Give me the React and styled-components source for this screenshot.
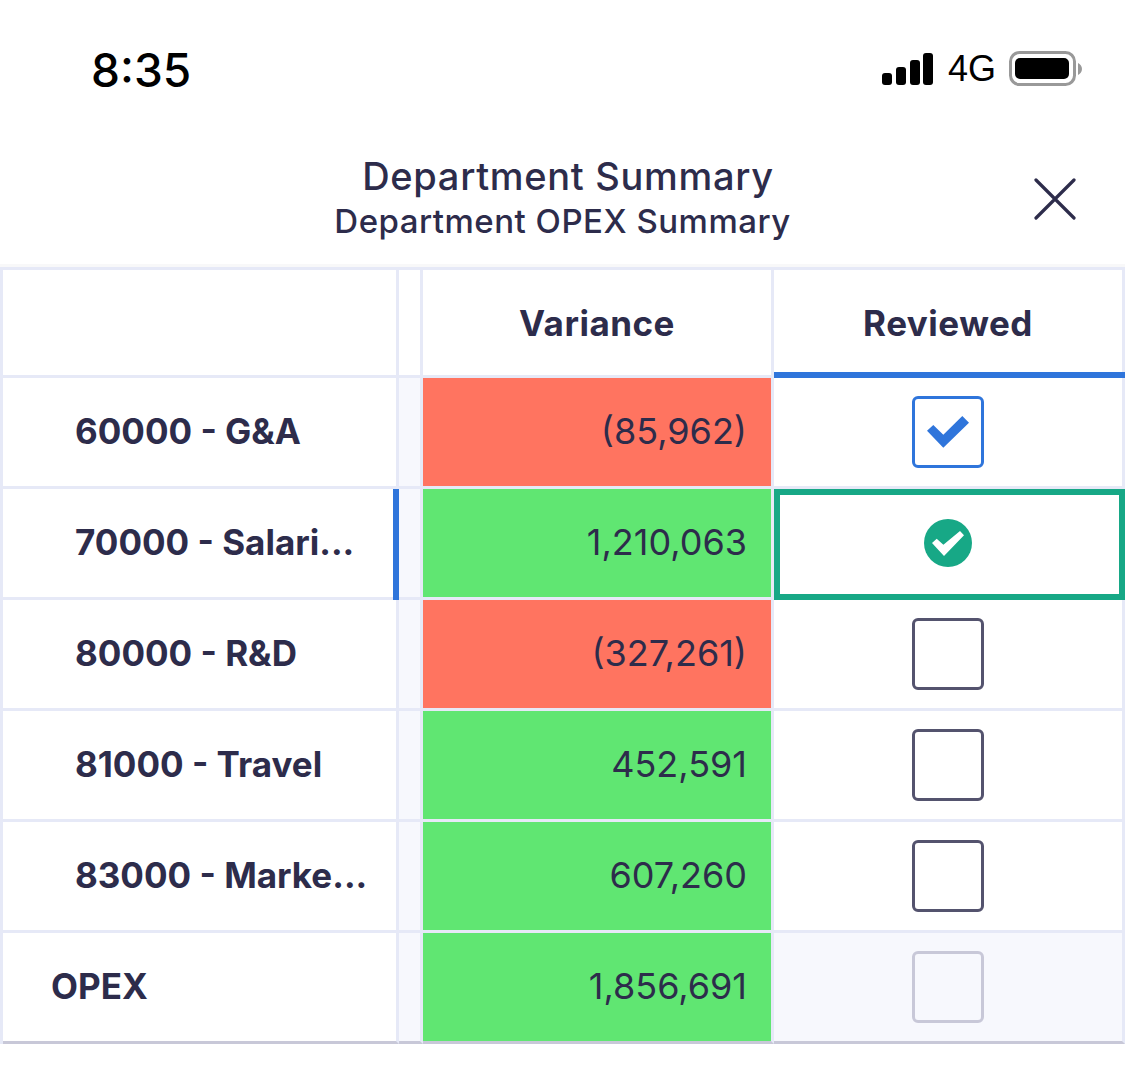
import React from 'react';
import styled, { createGlobalStyle } from 'styled-components';

const GlobalStyle = createGlobalStyle`
  html, body {
    margin: 0;
    padding: 0;
    background: #fff;
  }
  * {
    box-sizing: border-box;
  }
`;

const Screen = styled.div`
  width: 1125px;
  height: 1092px;
  background: #fff;
  color: #2d2c4b;
  font-family: Inter, Lato, sans-serif;
  overflow: hidden;
`;

const StatusBar = styled.div`
  height: 138px;
  padding: 42px 43px 0 91px;
  display: flex;
  justify-content: space-between;
  align-items: flex-start;
  color: #000;
`;

const Time = styled.div`
  font-size: 46px;
  font-weight: 500;
  line-height: 56px;
`;

const StatusIcons = styled.div`
  display: flex;
  align-items: center;
  height: 54px;
`;

const Network = styled.span`
  font-family: "Liberation Sans", sans-serif;
  font-size: 36px;
  line-height: 54px;
  margin: 0 13px 0 15px;
`;

const Header = styled.div`
  height: 129px;
  display: grid;
  grid-template-columns: 1fr auto 1fr;
  align-items: center;
  border-bottom: 3px solid #f8f8f9;
  padding-bottom: 6px;
`;

const Titles = styled.div`
  grid-column: 2;
  text-align: center;
`;

const Title = styled.div`
  font-size: 38px;
  font-weight: 500;
  letter-spacing: 0.7px;
  line-height: 46px;
  padding-left: 11px;
`;

const Subtitle = styled.div`
  font-size: 33px;
  font-weight: 500;
  letter-spacing: 0.5px;
  line-height: 44px;
`;

const CloseButton = styled.button`
  justify-self: end;
  margin: 1px 49px 0 0;
  padding: 0;
  border: none;
  background: none;
  display: flex;
`;

const Table = styled.div`
  display: grid;
  grid-template-columns: 396px 24px 351px 351px;
  grid-template-rows: 108px repeat(6, 111px);
  width: 1125px;
  border-top: 3px solid #e6e9f7;
  border-left: 3px solid #e6e9f7;
`;

const Cell = styled.div`
  display: flex;
  align-items: center;
  position: relative;
  border-right: 3px solid #e6e9f7;
  border-bottom: 3px solid ${(props) => (props.$last ? '#c8c8d8' : '#e6e9f7')};
  background: ${(props) => props.$bg || '#fff'};
`;

const HeaderCell = styled(Cell)`
  justify-content: center;
  font-size: 35px;
  font-weight: 700;
  letter-spacing: 0.5px;
`;

const ActiveUnderline = styled.div`
  position: absolute;
  left: 0;
  right: -3px;
  bottom: -3px;
  height: 6px;
  background: #2f75db;
`;

const RowLabel = styled(Cell)`
  font-size: 35px;
  font-weight: 700;
  padding-left: ${(props) => (props.$total ? '48px' : '72px')};
  padding-bottom: 2px;
`;

const Marker = styled.div`
  position: absolute;
  top: 0;
  right: -3px;
  bottom: -3px;
  width: 6px;
  background: #2f75db;
`;

const Value = styled(Cell)`
  justify-content: flex-end;
  padding: 0 24px 2px 0;
  font-size: 36px;
  font-weight: 400;
`;

const ReviewCell = styled(Cell)`
  justify-content: center;
`;

const SelectedOutline = styled.div`
  position: absolute;
  top: 0;
  left: 0;
  right: -3px;
  bottom: -3px;
  border: 6px solid #17a886;
`;

const Checkbox = styled.div`
  width: 72px;
  height: 72px;
  border-radius: 6px;
  border: 3px solid ${(props) => props.$color || '#54536e'};
  display: flex;
  align-items: center;
  justify-content: center;
`;

const rows = [
  { label: '60000 - G&A', value: '(85,962)', bg: '#ff7460', state: 'checked' },
  { label: '70000 - Salari...', value: '1,210,063', bg: '#60e672', state: 'selected' },
  { label: '80000 - R&D', value: '(327,261)', bg: '#ff7460' },
  { label: '81000 - Travel', value: '452,591', bg: '#60e672' },
  { label: '83000 - Marke...', value: '607,260', bg: '#60e672' },
  { label: 'OPEX', value: '1,856,691', bg: '#60e672', state: 'disabled', total: true },
];

function Signal() {
  return (
    <svg width="51" height="32" viewBox="0 0 51 32" fill="#000">
      <rect x="0" y="20" width="10" height="12" rx="3" />
      <rect x="14" y="14" width="10" height="18" rx="3" />
      <rect x="28" y="7" width="10" height="25" rx="3" />
      <rect x="41" y="0" width="10" height="32" rx="3" />
    </svg>
  );
}

function Battery() {
  return (
    <svg width="73" height="36" viewBox="0 0 73 36">
      <rect x="1.5" y="1.5" width="64" height="32" rx="9" fill="none" stroke="#999" strokeWidth="3" />
      <rect x="6" y="7" width="54" height="21" rx="5" fill="#000" />
      <path d="M69 12 C71 13 73 15 73 18 C73 21 71 23 69 24 Z" fill="#999" />
    </svg>
  );
}

function ReviewState({ state }) {
  if (state === 'checked') {
    return (
      <Checkbox $color="#2f75db">
        <svg width="42" height="32" viewBox="0 0 42 32">
          <path d="M0 14.7 L6.3 9 L16.3 18.7 L35.3 0 L42 6.7 L16.3 31.7 Z" fill="#2f75db" />
        </svg>
      </Checkbox>
    );
  }
  if (state === 'selected') {
    return (
      <>
        <SelectedOutline />
        <svg width="48" height="48" viewBox="0 0 48 48">
          <circle cx="24" cy="24" r="24" fill="#17a886" />
          <path d="M8 24 L12.7 19.7 L19.4 25.7 L36 12 L40 16.3 L20 37 Z" fill="#fff" />
        </svg>
      </>
    );
  }
  if (state === 'disabled') return <Checkbox $color="#c8c8d8" />;
  return <Checkbox />;
}

export default function App() {
  return (
    <Screen>
      <GlobalStyle />
      <StatusBar>
        <Time>8:35</Time>
        <StatusIcons>
          <Signal />
          <Network>4G</Network>
          <Battery />
        </StatusIcons>
      </StatusBar>
      <Header>
        <Titles>
          <Title>Department Summary</Title>
          <Subtitle>Department OPEX Summary</Subtitle>
        </Titles>
        <CloseButton aria-label="Close">
          <svg width="42" height="42" viewBox="0 0 42 42" stroke="#2d2c4b" strokeWidth="3.2" strokeLinecap="round">
            <path d="M2 2 L40 40 M40 2 L2 40" />
          </svg>
        </CloseButton>
      </Header>
      <Table>
        <HeaderCell />
        <HeaderCell />
        <HeaderCell>Variance</HeaderCell>
        <HeaderCell>
          Reviewed
          <ActiveUnderline />
        </HeaderCell>
        {rows.map((row, index) => {
          const last = index === rows.length - 1;
          return (
            <React.Fragment key={row.label}>
              <RowLabel $last={last} $total={row.total}>
                {row.label}
                {row.state === 'selected' && <Marker />}
              </RowLabel>
              <Cell $last={last} $bg="#f7f8fd" />
              <Value $last={last} $bg={row.bg}>{row.value}</Value>
              <ReviewCell $last={last} $bg={last ? '#f7f8fd' : '#fff'}>
                <ReviewState state={row.state} />
              </ReviewCell>
            </React.Fragment>
          );
        })}
      </Table>
    </Screen>
  );
}
